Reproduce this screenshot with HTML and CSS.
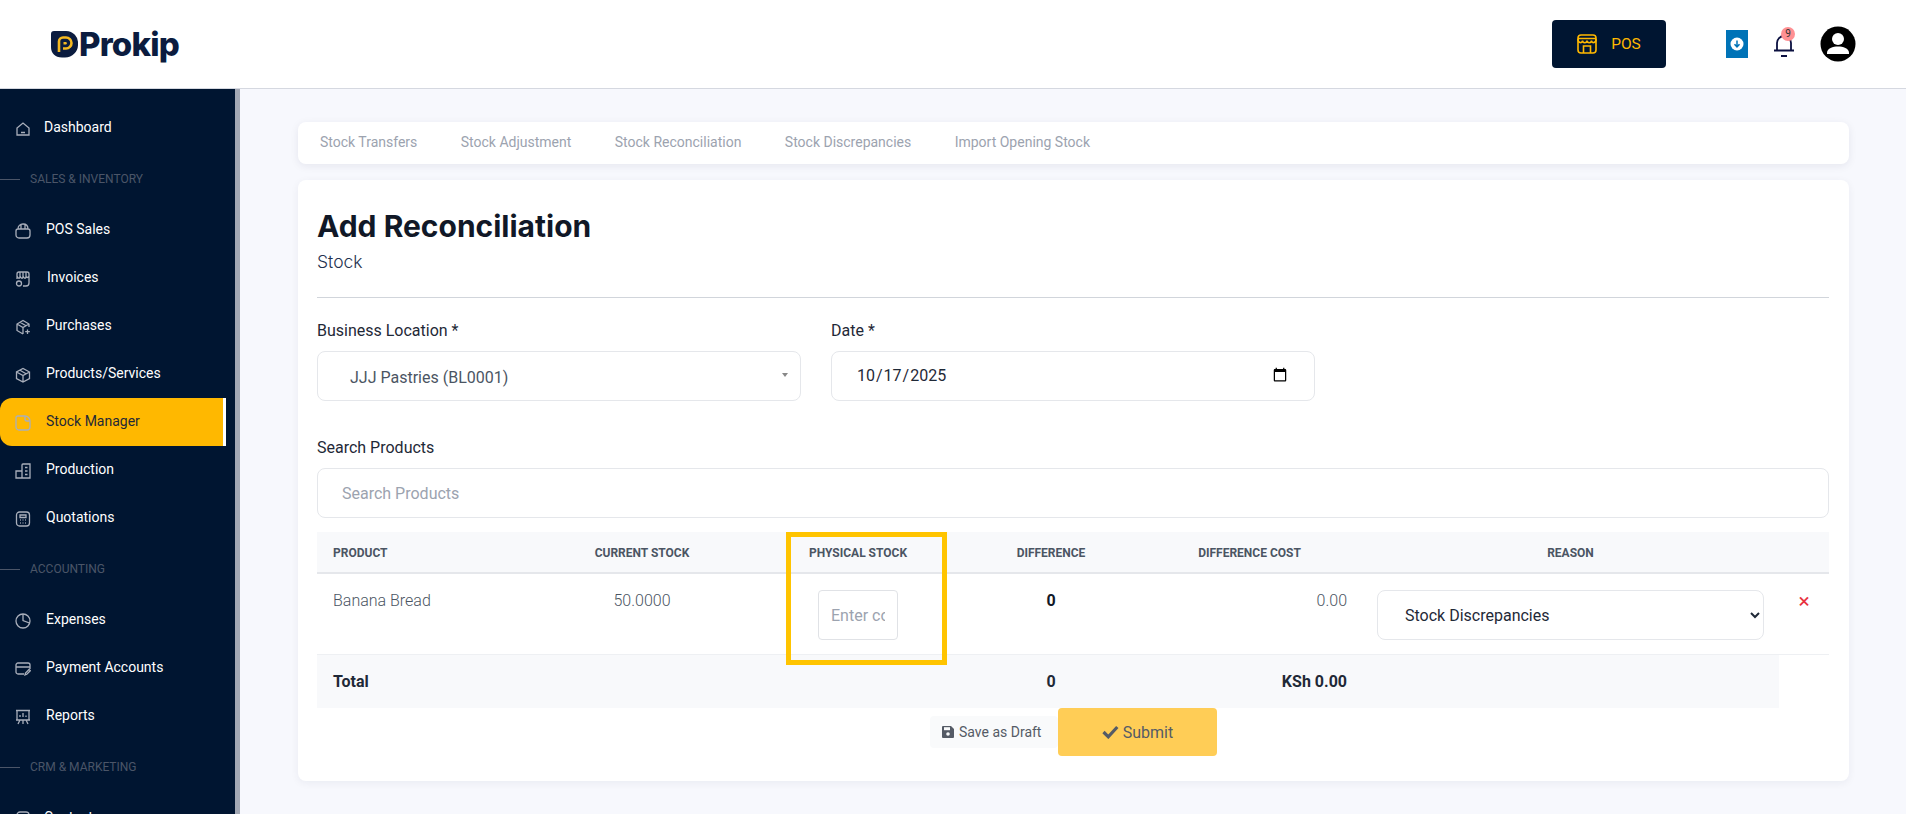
FILE: index.html
```html
<!DOCTYPE html>
<html lang="en">
<head>
<meta charset="utf-8">
<title>Add Reconciliation</title>
<link rel="stylesheet" href="styles.css">
</head>
<body>
<header class="topbar">
  <div class="logo">
    <svg class="logo-mark" viewBox="0 0 27 27" width="27" height="27"><path d="M3 0H15a12 12 0 0 1 12 13a13 13 0 0 1-13 13.500H11C4 26.500 0 22 0 16V3a3 3 0 0 1 3-3z" fill="#0b1c3f"/><path d="M8 21V10.500a4 4 0 0 1 4-4h3a5.500 5.500 0 0 1 0 11h-3" fill="none" stroke="#f5b921" stroke-width="2.600"/><path d="M12.500 13.500V11h2.500a1.300 1.300 0 0 1 0 2.500z" fill="#f5b921"/></svg>
    <span class="logo-text">Prokip</span>
  </div>
  <div class="top-actions">
    <button class="pos-btn">
      <svg viewBox="0 0 20 20" width="20" height="20" fill="none" stroke="#ffb800" stroke-width="1.600"><rect x="1" y="1" width="18" height="18" rx="3"/><path d="M1 4.500h18M1 5c0 4.500 4.500 4.500 4.500 1.500c0 3 4.500 3 4.500 0c0 3 4.500 3 4.500 0c0 3 4.500 3 4.500-1.500M6.500 19v-7h7v7"/></svg>
      <span>POS</span>
    </button>
    <div class="dl-btn">
      <svg viewBox="0 0 14 14" width="14" height="14"><circle cx="7" cy="7" r="6.500" fill="#fff"/><path d="M7 3.500v6M4.500 7.200L7 9.800l2.500-2.600" fill="none" stroke="#0073b7" stroke-width="1.500"/></svg>
    </div>
    <div class="bell">
      <svg viewBox="0 0 20 26" width="20" height="26" fill="none" stroke="#0b1040" stroke-width="1.800"><path d="M3 18V11a7 7 0 0 1 14 0v7M0 18.500h20M7 24h6"/></svg>
      <span class="badge">9</span>
    </div>
    <svg class="avatar" viewBox="0 0 36 36" width="36" height="36"><circle cx="18" cy="18" r="17.500" fill="#000"/><circle cx="18" cy="13" r="6" fill="#fff"/><path d="M7 27c0-5 6-6.500 11-6.500s11 1.500 11 6.500v1H7z" fill="#fff"/></svg>
  </div>
</header>
<div class="layout">
  <nav class="sidebar">
    <a class="nav-item nav-first"><svg viewBox="0 0 16 16" class="nav-icon"><path d="M2 14V7l6-5 6 5v7zM6 11.500h4"/></svg><span>Dashboard</span></a>
    <div class="nav-section"><i></i><span>SALES &amp; INVENTORY</span></div>
    <a class="nav-item"><svg viewBox="0 0 16 16" class="nav-icon"><path d="M3 6h10a2 2 0 0 1 2 2v4a3 3 0 0 1-3 3H4a3 3 0 0 1-3-3V8a2 2 0 0 1 2-2zM3 6c0-3 2-5 5-5s5 2 5 5M6 6V2M10 6V2"/></svg><span>POS Sales</span></a>
    <a class="nav-item nav-wide"><svg viewBox="0 0 16 16" class="nav-icon"><path d="M2 8V3a2 2 0 0 1 2-2h8a2 2 0 0 1 2 2v9a3 3 0 0 1-3 3H8M2 5c1 3 3 3 3 0V1M5 5c1 3 3 3 3 0V1M8 5c1 3 3 3 3 0V1M11 5c.5 2 2 2 3 0"/><circle cx="4" cy="12.500" r="2.500"/></svg><span>Invoices</span></a>
    <a class="nav-item"><svg viewBox="0 0 16 16" class="nav-icon"><path d="M14 8V5L8 1.500 2 5v6.500L8 15M2 5l6 3.500L14 5M8 8.500V15M5 3.200l6 3.500M12.500 10.500v4.500M10.200 12.700h4.600"/></svg><span>Purchases</span></a>
    <a class="nav-item"><svg viewBox="0 0 16 16" class="nav-icon"><path d="M14.500 5L8 1.500 1.500 5v6.500L8 15l6.500-3.500zM1.500 5L8 8.500 14.500 5M8 8.500V15M5 3.200l6 3.500"/></svg><span>Products/Services</span></a>
    <a class="nav-item active"><svg viewBox="0 0 16 16" class="nav-icon"><path d="M3 1h7a5 5 0 0 1 5 5v6a3 3 0 0 1-3 3H4a3 3 0 0 1-3-3V3a2 2 0 0 1 2-2zM10 1v3a2 2 0 0 0 2 2h3"/></svg><span>Stock Manager</span></a>
    <a class="nav-item"><svg viewBox="0 0 16 16" class="nav-icon"><path d="M1 15V8h6V2a1 1 0 0 1 1-1h7v14zM7 8v7M10 4.500h2.500M10 8h2.500M10 11.500h2.500"/></svg><span>Production</span></a>
    <a class="nav-item"><svg viewBox="0 0 16 16" class="nav-icon"><rect x="1.500" y="1" width="13" height="14" rx="3"/><path d="M5 4h6v2.500H5zM5 9h.8M7.600 9h.8M10.200 9h.8M5 12h.8M7.600 12h.8M10.200 12h.8"/></svg><span>Quotations</span></a>
    <div class="nav-section"><i></i><span>ACCOUNTING</span></div>
    <a class="nav-item"><svg viewBox="0 0 16 16" class="nav-icon"><circle cx="8" cy="8" r="7"/><path d="M8 1v6.500L14.500 10"/></svg><span>Expenses</span></a>
    <a class="nav-item"><svg viewBox="0 0 16 16" class="nav-icon"><path d="M9 13H3a2 2 0 0 1-2-2V4a2 2 0 0 1 2-2h10a2 2 0 0 1 2 2v4M1 6h14M10 14l.5-2 3.500-3.500 1.300 1.300-3.500 3.500z"/></svg><span>Payment Accounts</span></a>
    <a class="nav-item"><svg viewBox="0 0 16 16" class="nav-icon"><path d="M1 1.500h14M2 1.500V11h12V1.500M5 8V6M8 8V4M11 8V6.500M8 11v4M5 11l-2 4M11 11l2 4M1 11h14"/></svg><span>Reports</span></a>
    <div class="nav-section"><i></i><span>CRM &amp; MARKETING</span></div>
    <a class="nav-item nav-first"><svg viewBox="0 0 16 16" class="nav-icon"><rect x="2" y="1" width="12" height="14" rx="3"/></svg><span>Contacts</span></a>
  </nav>
  <main class="content">
    <div class="tabs">
      <a>Stock Transfers</a><a>Stock Adjustment</a><a>Stock Reconciliation</a><a>Stock Discrepancies</a><a>Import Opening Stock</a>
    </div>
    <section class="card">
      <h1>Add Reconciliation</h1>
      <p class="subtitle">Stock</p>
      <hr class="rule">
      <div class="form-row">
        <div class="field">
          <label>Business Location *</label>
          <div class="fake-select"><span>JJJ Pastries (BL0001)</span><i class="caret"></i></div>
        </div>
        <div class="field">
          <label>Date *</label>
          <input class="date-input" type="date" value="2025-10-17">
        </div>
      </div>
      <div class="search-field">
        <label>Search Products</label>
        <input class="search-input" type="text" placeholder="Search Products">
      </div>
      <div class="table-wrap">
        <table>
          <colgroup><col class="c1"><col class="c2"><col class="c3"><col class="c4"><col class="c5"><col class="c6"><col class="c7"></colgroup>
          <thead>
            <tr><th class="left">Product</th><th>Current Stock</th><th>Physical Stock</th><th>Difference</th><th>Difference Cost</th><th class="reason-cell">Reason</th><th></th></tr>
          </thead>
          <tbody>
            <tr class="row">
              <td class="left">Banana Bread</td>
              <td class="center">50.0000</td>
              <td class="center"><input class="count" type="text" placeholder="Enter count"></td>
              <td class="center strong">0</td>
              <td class="right">0.00</td>
              <td class="center reason-cell"><select class="reason"><option>Stock Discrepancies</option></select></td>
              <td class="center"><span class="remove">×</span></td>
            </tr>
          </tbody>
          <tfoot>
            <tr><td class="left total" colspan="3">Total</td><td class="center total">0</td><td class="right total">KSh 0.00</td><td class="total-fill"></td><td class="blank"></td></tr>
          </tfoot>
        </table>
        <div class="highlight"></div>
      </div>
      <div class="actions">
        <button class="draft"><svg viewBox="0 0 12 12" width="12" height="12"><path d="M1 0h8l3 3v8a1 1 0 0 1-1 1H1a1 1 0 0 1-1-1V1a1 1 0 0 1 1-1z" fill="#555b66"/><rect x="2" y="1.200" width="6" height="3" fill="#f9fafb"/><circle cx="6" cy="8" r="1.800" fill="#f9fafb"/></svg>Save as Draft</button>
        <button class="submit"><svg viewBox="0 0 17 14" width="17" height="14"><path d="M1.500 7l4.800 4.800 9-9.800" fill="none" stroke="#555b66" stroke-width="3.200"/></svg>Submit</button>
      </div>
    </section>
  </main>
</div>
</body>
</html>
```
FILE: styles.css
```css
* { box-sizing: border-box; }
html, body { margin: 0; height: 814px; overflow: hidden; }
body { font-family: Roboto, "Liberation Sans", sans-serif; background: #f7f8fd; color: #111827; }

.topbar { height: 89px; background: #fff; border-bottom: 1px solid #d5d8e0; display: flex; align-items: center; justify-content: space-between; padding: 0 50px 0 51px; }
.logo { display: flex; align-items: center; gap: 1px; }
.logo-mark { display: block; }
.logo-text { font-family: Inter, sans-serif; font-weight: 800; font-size: 33px; letter-spacing: -.8px; color: #0b1c3f; line-height: 33px; }
.top-actions { display: flex; align-items: center; }
.pos-btn { width: 114px; height: 48px; background: #001531; border: 0; border-radius: 4px; color: #ffb800; font: 400 15.500px Roboto, sans-serif; display: flex; align-items: center; justify-content: center; gap: 14px; margin-right: 60px; }
.dl-btn { width: 22px; height: 28px; background: #0073b7; display: flex; align-items: center; justify-content: center; margin-right: 26px; }
.bell { position: relative; width: 20px; height: 26px; margin-right: 26px; margin-top: 2px; }
.bell svg { display: block; }
.badge { position: absolute; top: -5px; left: 7px; width: 14px; height: 14px; border-radius: 50%; background: #ff9093; color: #333; font-size: 10px; line-height: 13px; text-align: center; }
.avatar { display: block; }

.layout { display: flex; height: 725px; }
.sidebar { width: 240px; flex: none; background: #001531; border-right: 5px solid #a2a7b3; overflow: hidden; padding-top: 14px; }
.nav-item { display: flex; align-items: center; height: 48px; width: 226px; color: #fff; font-size: 14px; padding-left: 15px; gap: 15px; }
.nav-first { gap: 13px; }
.nav-wide { gap: 16px; }
.nav-icon { width: 16px; height: 16px; flex: none; margin-top: 4px; fill: none; stroke: #a9afbb; stroke-width: 1.300; }
.nav-item.active { background: #ffb800; color: #1f2937; border-right: 3px solid #fff; border-radius: 12px 0 0 12px; margin: 1px 0 -1px; padding-bottom: 3px; }
.nav-section { display: flex; align-items: center; height: 54px; padding-top: 2px; gap: 10px; color: #4b5568; font-size: 12px; }
.nav-section i { width: 20px; height: 1px; background: #4b5568; }

.content { flex: 1; padding: 33px 57px 0 58px; min-width: 0; }
.tabs { height: 42px; background: #fff; border-radius: 8px; box-shadow: 0 2px 8px rgba(20, 30, 60, .08); display: flex; align-items: center; gap: 43.450px; padding: 0 0 3px 22px; font-size: 14px; color: #9ca3af; }
.card { margin-top: 16px; height: 601px; background: #fff; border-radius: 8px; box-shadow: 0 2px 8px rgba(20, 30, 60, .06); padding: 27px 20px 0 19px; }
h1 { margin: 0; font-family: Inter, sans-serif; font-weight: 700; font-size: 30px; line-height: 38px; color: #111827; }
.subtitle { margin: 6px 0 0; font-family: Inter, sans-serif; font-weight: 300; font-size: 17.500px; line-height: 22px; color: #1f3350; }
.rule { margin: 24px 0 0; border: 0; border-top: 1px solid #d1d5db; }
label { display: block; font-size: 16px; line-height: 20px; color: #1f2937; }
.form-row { display: flex; gap: 30px; margin-top: 23px; }
.field { width: 484px; }
.fake-select, .date-input { margin-top: 10px; height: 50px; width: 100%; border: 1px solid #e5e7eb; border-radius: 8px; background: #fff; }
.fake-select { display: flex; align-items: center; justify-content: space-between; padding: 2px 12px 0 32px; font-size: 16px; color: #4b5563; }
.caret { width: 0; height: 0; border: 3px solid transparent; border-top: 4px solid #888; border-bottom: 0; margin-top: -4px; }
.date-input { display: block; padding: 0 24px 2px 24px; font: 400 16px Roboto, sans-serif; color: #1f2937; }
.search-field { margin-top: 37px; }
.search-input { display: block; margin-top: 10px; width: 100%; height: 50px; border: 1px solid #e5e7eb; border-radius: 8px; padding: 0 24px; font: 400 16px Roboto, sans-serif; }
.search-input::placeholder { color: #9ca3af; }
.table-wrap { position: relative; margin-top: 14px; }
table { width: 100%; table-layout: fixed; border-collapse: collapse; }
.c1 { width: 213px; } .c2 { width: 224px; } .c3 { width: 208px; } .c4 { width: 178px; } .c5 { width: 219px; } .c6 { width: 420px; } .c7 { width: 50px; }
th { height: 41px; background: #f8f9fb; border-bottom: 2px solid #e5e7eb; font-size: 12px; font-weight: 700; text-transform: uppercase; color: #4b5563; text-align: center; padding: 1px 0 0; }
td { padding: 0; }
.row td { height: 81px; vertical-align: top; padding-top: 16px; font-size: 16px; line-height: 22px; font-weight: 300; color: #4b5563; border-bottom: 1px solid #eef0f3; }
.left { text-align: left; padding-left: 16px; }
th.left { padding-left: 16px; }
.center { text-align: center; }
.right { text-align: right; padding-right: 12px; }
.row .right { padding-right: 12px; }
.row .strong { font-weight: 700; color: #111827; }
.reason-cell { padding-left: 3px; }
.count { width: 80px; height: 50px; border: 1px solid #e0e2e6; border-radius: 4px; padding: 0 12px; font: 400 16px Roboto, sans-serif; display: block; margin-left: 64px; }
.count::placeholder { color: #9ca3af; }
.reason { display: block; width: 387px; height: 50px; margin-left: 15px; border: 1px solid #e5e7eb; border-radius: 8px; background: #fff; padding-left: 23px; font: 400 16px Roboto, sans-serif; color: #1f2937; }
.remove { color: #e8333f; font-size: 21px; font-weight: 400; }
tfoot td { height: 54px; font-size: 16px; font-weight: 700; color: #1f2937; }
.total, .total-fill { background: #f8f9fb; }
.highlight { position: absolute; left: 469px; top: 0; width: 161px; height: 133px; border: 5px solid #ffc400; pointer-events: none; }
.actions { display: flex; justify-content: flex-start; padding-left: 613px; align-items: flex-start; }
.actions button { font-family: Roboto, sans-serif; border: 0; color: #555b66; display: flex; align-items: center; }
.draft { width: 128px; height: 32px; margin-top: 8px; padding: 0 0 0 12px; background: #f9fafb; font-size: 14px; gap: 5px; border-radius: 4px; }
.submit { width: 159px; height: 48px; justify-content: center; background: #ffcd56; font-size: 16px; gap: 4px; border-radius: 4px; }
```
